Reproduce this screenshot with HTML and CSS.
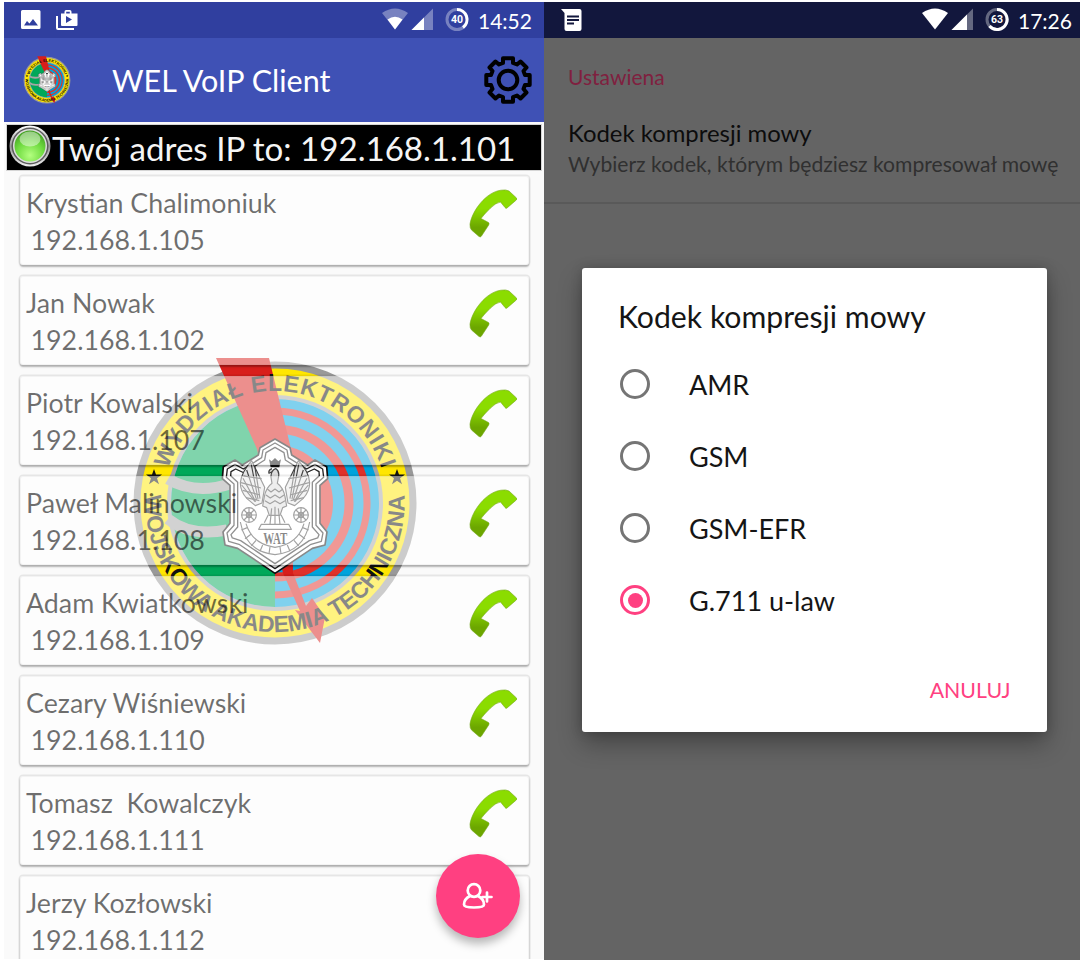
FILE: index.html
```html
<!DOCTYPE html>
<html lang="pl">
<head>
<meta charset="utf-8">
<title>WEL VoIP Client</title>
<link rel="stylesheet" href="styles.css">
</head>
<body>
<svg class="defs" width="0" height="0" aria-hidden="true">
  <defs>
    <linearGradient id="green" x1="0" y1="0" x2="0" y2="1">
      <stop offset=".4" stop-color="#8bdc00"/><stop offset=".8" stop-color="#6ca600"/>
    </linearGradient>
    <linearGradient id="rim" x1="0" y1="0" x2="0" y2="1">
      <stop offset="0" stop-color="#fff"/><stop offset=".5" stop-color="#999"/><stop offset="1" stop-color="#eee"/>
    </linearGradient>
    <radialGradient id="led" cx=".5" cy=".8" r=".8">
      <stop offset="0" stop-color="#b4ff80"/><stop offset=".55" stop-color="#6fdb40"/><stop offset="1" stop-color="#3f9c20"/>
    </radialGradient>
    <path id="arc-top" d="M-112 0A112 112 0 0 1 112 0"/>
    <path id="arc-bottom" d="M-128 -20A129.5 129.5 0 1 0 128 -20"/>
    <symbol id="phone" viewBox="0 0 48 49">
      <path d="M1 35C3 22 17 3 32 1.2Q37 .3 40 2L47.5 9Q48.5 10 47.3 11L38 19Q37 20 36 18.5L31.5 13Q27 13.500 21 19.500T12 29.5L19.500 33.500Q20.500 34.500 19.700 36L12.500 47Q11.500 48.500 10 47.500L2.500 41Q.7 39 1 35Z" fill="url(#green)" stroke="#75a81f" stroke-width=".6"/>
    </symbol>
    <symbol id="seal" viewBox="-145 -146 290 290">
      <circle r="138" fill="#ffe600" stroke="#999" stroke-width="7"/>
      <circle r="106" fill="#00a3dc"/>
      <path d="M0-104A104 104 0 0 0 0 104Z" fill="#00a859"/>
      <g fill="none" stroke="#e0312a">
        <path d="M0-92A92 92 0 0 1 0 92" stroke-width="7"/>
        <path d="M0-74A74 74 0 0 1 0 74" stroke-width="9"/>
        <path d="M0-51A51 51 0 0 1 0 51" stroke-width="14"/>
      </g>
      <g fill="none" stroke="#a5a5a5" stroke-width="11">
        <path d="M-107 -24Q-80 -8-45-19" /><path d="M-107 16Q-85 34-48 27"/>
      </g>
      <circle r="106" fill="none" stroke="#a5a5a5" stroke-width="4"/>
      <path d="M-59-145H-6L17-50L18 70L31 103L37 95L50 114L45 140L20 107L25 108L8 70L-18-54Z" fill="#d81e1b"/>
      <g fill="#111">
        <path id="star" d="M-121-34l2 5.500h6l-5 3.700 2 6-5-3.500-5 3.500 2-6-5-3.700h6z"/>
        <use href="#star" x="243"/>
      </g>
      <g class="seal-text">
        <text><textPath href="#arc-top" startOffset="50%" text-anchor="middle" textLength="282">WYDZIAŁ ELEKTRONIKI</textPath></text>
        <text><textPath href="#arc-bottom" startOffset="50%" text-anchor="middle" textLength="422">WOJSKOWA AKADEMIA TECHNICZNA</textPath></text>
      </g>
      <g transform="translate(-60 -73) scale(.3333)" stroke-linejoin="round" fill="none">
        <path id="shield" d="M180 27L225 53L230 75L278 105L300 90L335 110L338 146L315 166V280L336 306L330 345L292 355L180 430L68 355L30 345L24 306L45 280V166L22 146L25 110L60 90L82 105L130 75L135 53Z" fill="#fff" stroke="#111" stroke-width="5"/>
        <g stroke="#222" stroke-width="4">
          <path d="M180 39L216 60L220 83L275 117L300 103L323 117L326 142L303 162V286L324 309L319 334L288 343L180 416L72 343L41 334L36 309L57 286V162L34 142L37 117L60 103L85 117L140 83L144 60Z"/>
          <path d="M180 52L207 68L211 90L272 129L298 117L312 125L313 137L292 157V291L312 314L308 324L283 332L180 401L77 332L52 324L48 314L68 291V157L47 137L48 125L62 117L88 129L149 90L153 68Z"/>
        </g>
        <path d="M162 88l8 6 10-10 10 10 8-6-5 24h-26z" fill="#111"/>
        <g stroke="#444" stroke-width="3.500">
          <path d="M171 116q-12 4-9 14l9-5M183 116q12 8 7 28l-3 16q18 13 23 40l5 28-12 5-8 23h-32l-8-23-12-5 5-28q5-27 23-40l-3-18q-1-20 14-26Z" fill="#ddd"/>
          <path d="M149 172L110 92Q80 125 76 158q0 26 20 48l25 21 20-8z M211 172L250 92Q282 125 284 158q0 26-20 48l-25 21-20-8z" fill="#e8e8e8"/>
          <path d="M108 99l21 108M95 120l30 90M84 145l38 70M80 165l40 50M120 112l15 94M252 99l-21 108M265 120l-30 90M276 145l-38 70M280 165l-40 50M240 112l-15 94"/>
          <path d="M85 138l55 8M78 158l60 16M83 181l52 14M93 203l40 9M275 138l-55 8M282 158l-60 16M277 181l-52 14M267 203l-40 9"/>
          <path d="M157 177l11 9 12-9 12 9 12-9M153 195l13 9 14-9 14 9 13-9M150 212l15 9 15-9 15 9 15-9M160 254l-12 24M198 254l12 24M170 235l-5 48M190 235l5 48M180 230v53"/>
          <circle cx="102" cy="255" r="22" fill="#fff"/><circle cx="102" cy="255" r="8"/><path d="M80 255h44M102 233v44M87 240l30 30M117 240l-30 30"/>
          <circle cx="258" cy="255" r="22" fill="#fff"/><circle cx="258" cy="255" r="8"/><path d="M236 255h44M258 233v44M243 240l30 30M273 240l-30 30"/>
          <path d="M76 276Q92 365 180 374Q268 365 284 276M93 281Q112 343 180 352Q248 343 267 281M139 283h82l8 15H131z"/>
          <path d="M79 300l18-7M90 326l18-13M109 348l14-17M135 364l8-19M162 371l3-20M281 300l-18-7M270 326l-18-13M251 348l-14-17M225 364l-8-19M198 371l-3-20"/>
        </g>
        <text class="seal-wat" x="181" y="341" text-anchor="middle" textLength="72" lengthAdjust="spacingAndGlyphs">WAT</text>
      </g>
    </symbol>
  </defs>
</svg>
<div class="board">
  <section class="phone phone-main">
    <header class="status">
      <svg class="status-icons" width="60" height="24" viewBox="0 0 60 24">
        <path fill="#fff" fill-rule="evenodd" d="M2.500 2h16.500q1.500 0 1.500 1.500v16q0 1.500-1.500 1.500h-16.500q-1.500 0-1.500-1.500v-16q0-1.500 1.500-1.500zM4 17.500h14l-5-6.500-3.500 4.500-2.500-2.500z"/>
        <path fill="#fff" fill-rule="evenodd" d="M41 5.500h3.500v-1.800q0-1.700 1.700-1.700h3.600q1.700 0 1.700 1.700v1.800h6v11.500q0 1-1 1h-14.500q-1 0-1-1zM46.200 3.700v1.800h3.600v-1.800zM46 8v7l6-3.500z"/>
        <path fill="none" stroke="#fff" stroke-width="2" d="M37 8v12q0 1 1 1h16"/>
      </svg>
      <svg class="status-signal" width="88" height="26" viewBox="0 0 88 26">
        <path d="M0 6Q13-3 26 6L13 22.500Z" fill="#fff" opacity=".35"/><path d="M5.500 12.500Q13 7 20.500 12.500L13 22.500Z" fill="#fff"/>
        <path d="M29.500 23L51 1.500V23Z" fill="#fff" opacity=".35"/><path d="M29.500 23L42 10.500V23Z" fill="#fff"/>
        <circle cx="75" cy="12.500" r="10" fill="none" stroke="#fff" stroke-opacity=".35" stroke-width="3"/>
        <path d="M75 2.500A10 10 0 0 1 81 20.500" fill="none" stroke="#fff" stroke-width="3"/>
        <text class="battery" x="75" y="16.400" text-anchor="middle">40</text>
      </svg>
      <span class="clock">14:52</span>
    </header>
    <div class="toolbar">
      <svg class="logo" width="48" height="48"><use href="#seal"/></svg>
      <h1 class="title">WEL VoIP Client</h1>
      <svg class="gear" width="50" height="50" viewBox="-25 -25 50 50" fill="none" stroke="#000" stroke-width="4" stroke-linejoin="round">
        <path d="M-5-21.700H5V-17L9-15.500L12.500-18.500L18.500-12.500L15.500-9L17-5H21.700V5H17L15.500 9L18.500 12.500L12.500 18.500L9 15.500L5 17V21.700H-5V17L-9 15.500L-12.500 18.500L-18.500 12.500L-15.500 9L-17 5H-21.700V-5H-17L-15.500-9L-18.500-12.500L-12.500-18.500L-9-15.500L-5-17Z"/><circle r="9.300"/>
      </svg>
    </div>
    <div class="address">
      <svg width="42" height="42" viewBox="0 0 42 42">
        <circle cx="21" cy="21" r="20.500" fill="url(#rim)"/><circle cx="21" cy="21" r="18.500" fill="#5c5c5c"/><circle cx="21" cy="21" r="17" fill="#ddd"/><circle cx="21" cy="21" r="15.500" fill="url(#led)"/>
        <ellipse cx="21" cy="14" rx="10.500" ry="7.500" fill="#fff" opacity=".45"/>
      </svg>
      <span>Twój adres IP to: 192.168.1.101</span>
    </div>
    <svg class="seal" width="290" height="290"><use href="#seal"/></svg>
    <ul class="contacts">
      <li class="card"><div><p>Krystian Chalimoniuk</p><p class="ip">192.168.1.105</p></div><svg class="call"><use href="#phone"/></svg></li>
      <li class="card"><div><p>Jan Nowak</p><p class="ip">192.168.1.102</p></div><svg class="call"><use href="#phone"/></svg></li>
      <li class="card"><div><p>Piotr Kowalski</p><p class="ip">192.168.1.107</p></div><svg class="call"><use href="#phone"/></svg></li>
      <li class="card"><div><p>Paweł Malinowski</p><p class="ip">192.168.1.108</p></div><svg class="call"><use href="#phone"/></svg></li>
      <li class="card"><div><p>Adam Kwiatkowski</p><p class="ip">192.168.1.109</p></div><svg class="call"><use href="#phone"/></svg></li>
      <li class="card"><div><p>Cezary Wiśniewski</p><p class="ip">192.168.1.110</p></div><svg class="call"><use href="#phone"/></svg></li>
      <li class="card"><div><p>Tomasz&nbsp; Kowalczyk</p><p class="ip">192.168.1.111</p></div><svg class="call"><use href="#phone"/></svg></li>
      <li class="card"><div><p>Jerzy Kozłowski</p><p class="ip">192.168.1.112</p></div></li>
    </ul>
    <button class="fab" aria-label="Dodaj">
      <svg width="32" height="28" viewBox="0 0 32 28" fill="none" stroke="#fff" stroke-width="2.700" stroke-linecap="round">
        <circle cx="12" cy="8.500" r="6.300"/><path d="M8 14Q2 17 2 22.500Q2 25.500 12 25.500T22 22.500Q22 17 16 14M20.500 15h9M25 10.500v9"/>
      </svg>
    </button>
  </section>
  <section class="phone phone-settings">
    <header class="status">
      <svg class="status-icons" width="24" height="24" viewBox="0 0 24 24">
        <path fill="#fff" d="M0 1h18.500q2 0 2 2v18q0 2-2 2h-13q-2 0-2-2V5z"/><path d="M6 8.500h12M6 12h12M6 15.500h7" stroke="#12173d" stroke-width="1.800"/>
      </svg>
      <svg class="status-signal" width="88" height="26" viewBox="0 0 88 26">
        <path d="M0 6Q13-3 26 6L13 22.500Z" fill="#fff"/>
        <path d="M29.500 23L51 1.500V23Z" fill="#fff" opacity=".35"/><path d="M29.500 23L45 7.500V23Z" fill="#fff"/>
        <circle cx="75" cy="12.500" r="10" fill="none" stroke="#fff" stroke-opacity=".35" stroke-width="3"/>
        <path d="M75 2.500A10 10 0 1 1 67.500 19" fill="none" stroke="#fff" stroke-width="3"/>
        <text class="battery" x="75" y="16.400" text-anchor="middle">63</text>
      </svg>
      <span class="clock">17:26</span>
    </header>
    <div class="settings">
      <h2 class="category">Ustawiena</h2>
      <p class="pref">Kodek kompresji mowy</p>
      <p class="summary">Wybierz kodek, którym będziesz kompresował mowę</p>
    </div>
    <div class="dialog">
      <h2 class="dialog-title">Kodek kompresji mowy</h2>
      <ul class="options">
        <li class="option"><span class="radio"></span>AMR</li>
        <li class="option"><span class="radio"></span>GSM</li>
        <li class="option"><span class="radio"></span>GSM-EFR</li>
        <li class="option"><span class="radio radio-on"></span>G.711 u-law</li>
      </ul>
      <button class="cancel">ANULUJ</button>
    </div>
  </section>
</div>
</body>
</html>
```
FILE: styles.css
```css
* { box-sizing: border-box; }
body, h1, h2, p, ul { margin: 0; padding: 0; font-weight: 400; }
ul { list-style: none; }
body { background: #fff; font-family: Lato, sans-serif; }
button { border: 0; font-family: inherit; }
.defs { position: absolute; }
.board { display: flex; width: 1080px; height: 960px; padding: 2px 0 0 4px; overflow: hidden; }
.phone { position: relative; display: flex; flex-direction: column; overflow: hidden; }
.phone-main { width: 540px; height: 957px; background: #fafafa; }
.phone-settings { width: 536px; height: 958px; background: #646464; }

.status { display: flex; align-items: center; height: 36px; flex: none; padding: 0 13px 0 16px; color: #fff; background: #303f9f; }
.phone-settings .status { background: #12173d; padding: 0 9px 0 17px; }
.status-signal { margin-left: auto; margin-right: 8px; }
.clock { width: 53px; padding-top: 1px; font-size: 21px; line-height: 36px; white-space: nowrap; }
.battery { font: 700 10.500px Roboto, sans-serif; fill: #fff; }

.toolbar { display: flex; align-items: center; height: 84px; flex: none; padding: 0 11px 0 19px; background: #3f51b5; }
.title { margin-left: 41px; font-size: 30.500px; line-height: 40px; color: #fff; }
.gear { margin-left: auto; }

.address { display: flex; align-items: center; height: 45px; flex: none; margin: 3px 3px 0; padding-left: 2px; background: #000; color: #f5f5f5; font-size: 33.100px; line-height: 45px; white-space: nowrap; box-shadow: 0 0 0 1px #d5d5d5; }
.address svg { flex: none; margin-top: -3px; }
.address span { margin-left: 1px; padding-top: 1px; }

.seal { position: absolute; left: 126px; top: 355px; }
.seal-text { font: 700 23px "Liberation Sans", Arial, sans-serif; fill: #111; }
.seal-wat { font: 700 48px "Liberation Serif", serif; fill: #111; }

.contacts { position: relative; display: flex; flex-direction: column; gap: 11px; padding: 6px 15px 0 16px; }
.card { display: flex; justify-content: space-between; height: 89px; flex: none; padding: 9px 12px 0 6px; border-radius: 3px; background: rgba(255, 255, 255, .5); box-shadow: inset 0 0 0 1px rgba(0, 0, 0, .04), 0 0 0 1.500px rgba(0, 0, 0, .08), 0 2px 2px rgba(0, 0, 0, .25); color: rgba(0, 0, 0, .57); font-size: 26.800px; line-height: 37px; white-space: nowrap; }
.ip { padding-left: 4.500px; }
.call { width: 48px; height: 49px; margin-top: 4px; }

.fab { position: absolute; right: 24px; bottom: 21px; display: grid; place-items: center; width: 84px; height: 84px; padding: 0; border-radius: 50%; background: #ff4081; box-shadow: 0 6px 10px rgba(0, 0, 0, .28); }

.settings { padding: 24px 0 0 24px; height: 166px; border-bottom: 2px solid #595959; white-space: nowrap; }
.category { color: #80203f; font-size: 21px; line-height: 30px; }
.pref { margin-top: 25px; color: #0c0c0c; font-size: 23.900px; line-height: 32px; }
.summary { color: #303030; font-size: 21.100px; line-height: 30px; }

.dialog { position: absolute; left: 37.500px; top: 266px; display: flex; flex-direction: column; width: 465px; height: 464px; padding: 28px 32px 0 36.500px; border-radius: 3px; background: #fff; box-shadow: 0 12px 24px rgba(0, 0, 0, .3), 0 0 12px rgba(0, 0, 0, .18); color: #151515; }
.dialog-title { font-size: 30.200px; line-height: 40px; white-space: nowrap; }
.options { margin-top: 12px; }
.option { display: flex; align-items: center; height: 72px; padding-left: 2px; font-size: 27px; }
.radio { display: grid; place-items: center; width: 30px; height: 30px; margin: 0 39px 0 0; border: 3px solid #757575; border-radius: 50%; }
.radio-on { border-color: #ff4081; }
.radio-on::after { content: ""; width: 15px; height: 15px; border-radius: 50%; background: #ff4081; }
.cancel { align-self: flex-end; margin-top: 38px; padding: 0 4px; background: none; color: #ff4081; font-size: 21.300px; line-height: 32px; }
```
